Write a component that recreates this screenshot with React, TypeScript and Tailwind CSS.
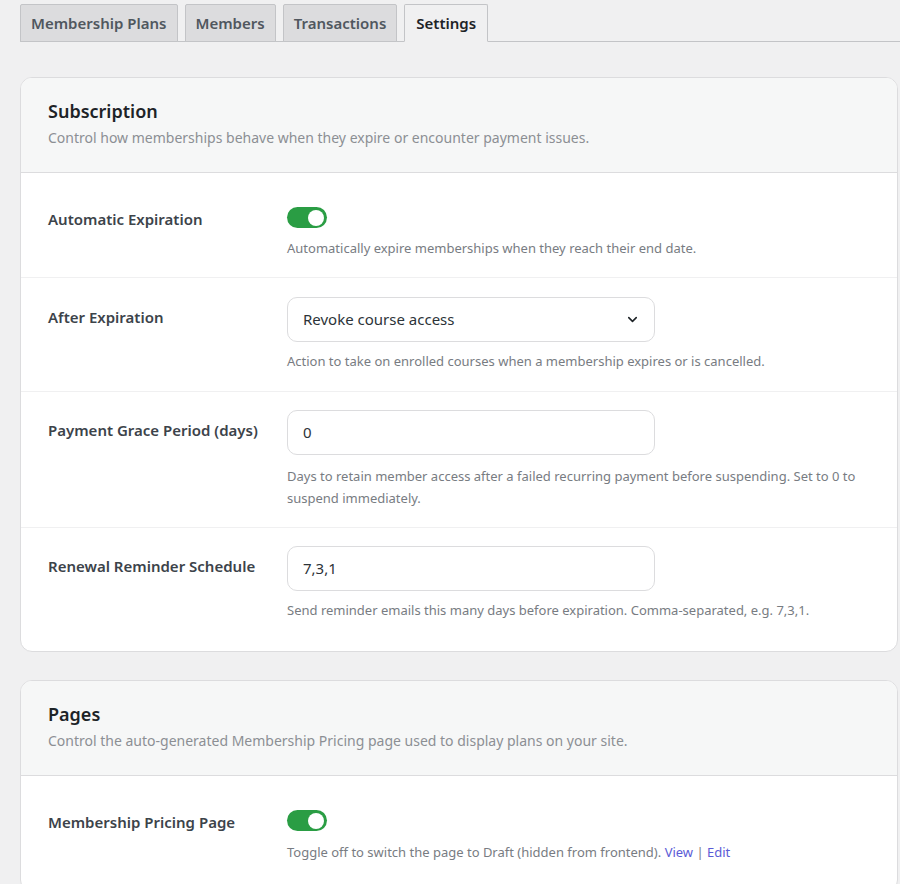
import { ChevronDown } from 'lucide-react'

const FONT = { fontFamily: '"Noto Sans", "Open Sans", sans-serif' }

const TABS = ['Membership Plans', 'Members', 'Transactions', 'Settings']

function Toggle() {
  return (
    <div className="flex h-[21px] w-[40px] items-center justify-end rounded-full bg-[#2a9d44] pr-[3px]">
      <div className="h-[16px] w-[16px] rounded-full bg-white" />
    </div>
  )
}

function TextBox({ value, select }: { value: string; select?: boolean }) {
  return (
    <div className="flex h-[45px] w-[368px] items-center justify-between rounded-[10px] border border-[#dcdcde] bg-white pl-[15px] pr-[14px] text-[15px] text-[#2c3338]">
      <span>{value}</span>
      {select && <ChevronDown className="h-[15px] w-[15px] text-[#1d2327]" strokeWidth={2.5} />}
    </div>
  )
}

function Row({ label, children, pt, pb, labelTop, last }: {
  label: string; children: React.ReactNode; pt: string; pb: string; labelTop: string; last?: boolean
}) {
  return (
    <div className={`flex px-[27px] ${pt} ${pb} ${last ? '' : 'border-b border-[#f0f0f1]'}`}>
      <div className={`w-[239px] shrink-0 text-[15px] font-semibold leading-[22px] text-[#3c434a] ${labelTop}`}>
        {label}
      </div>
      <div className="flex-1">{children}</div>
    </div>
  )
}

function Desc({ children, mt }: { children: React.ReactNode; mt: string }) {
  return <p className={`${mt} text-[13px] leading-[22px] text-[#787c82]`}>{children}</p>
}

function CardHeader({ title, desc }: { title: string; desc: string }) {
  return (
    <div className="border-b border-[#dcdcde] bg-[#f6f7f7] px-[27px] pt-[20px] pb-[23px]">
      <h2 className="text-[18px] font-semibold leading-[26px] text-[#1d2327]">{title}</h2>
      <p className="mt-[3px] text-[14px] leading-[22px] text-[#8c8f94]">{desc}</p>
    </div>
  )
}

export default function App() {
  return (
    <div className="min-h-screen bg-[#f0f0f1] pl-[20px]" style={FONT}>
      {/* tabs */}
      <div className="flex gap-[7px] border-b border-[#c3c4c7] pt-[4px]">
        {TABS.map(t => (
          <div
            key={t}
            className={`-mb-px rounded-t-[2px] border border-[#c3c4c7] px-[10px] py-[5px] text-[15px] font-semibold leading-[26px] ${
              t === 'Settings' ? 'border-b-[#f0f0f1] bg-[#f0f0f1] px-[11px] text-[#1d2327]' : 'bg-[#dcdcde] text-[#50575e]'
            }`}
          >
            {t}
          </div>
        ))}
      </div>

      {/* Subscription */}
      <div className="mr-[2px] mt-[35px] overflow-hidden rounded-[12px] border border-[#dcdcde] bg-white">
        <CardHeader title="Subscription" desc="Control how memberships behave when they expire or encounter payment issues." />

        <Row label="Automatic Expiration" pt="pt-[34px]" pb="pb-[18px]" labelTop="pt-[1px]">
          <Toggle />
          <Desc mt="mt-[9px]">Automatically expire memberships when they reach their end date.</Desc>
        </Row>

        <Row label="After Expiration" pt="pt-[19px]" pb="pb-[19px]" labelTop="pt-[9px]">
          <TextBox value="Revoke course access" select />
          <Desc mt="mt-[8px]">Action to take on enrolled courses when a membership expires or is cancelled.</Desc>
        </Row>

        <Row label="Payment Grace Period (days)" pt="pt-[18px]" pb="pb-[18px]" labelTop="pt-[9px]">
          <TextBox value="0" />
          <Desc mt="mt-[10px]">
            Days to retain member access after a failed recurring payment before suspending. Set to 0 to suspend immediately.
          </Desc>
        </Row>

        <Row label="Renewal Reminder Schedule" pt="pt-[18px]" pb="pb-[30px]" labelTop="pt-[9px]" last>
          <TextBox value="7,3,1" />
          <Desc mt="mt-[8px]">Send reminder emails this many days before expiration. Comma-separated, e.g. 7,3,1.</Desc>
        </Row>
      </div>

      {/* Pages */}
      <div className="mr-[2px] mt-[28px] overflow-hidden rounded-[12px] border border-[#dcdcde] bg-white">
        <CardHeader title="Pages" desc="Control the auto-generated Membership Pricing page used to display plans on your site." />

        <Row label="Membership Pricing Page" pt="pt-[34px]" pb="pb-[28px]" labelTop="pt-[1px]" last>
          <Toggle />
          <Desc mt="mt-[10px]">
            Toggle off to switch the page to Draft (hidden from frontend).{' '}
            <a className="text-[#5b5bd6]">View</a> | <a className="text-[#5b5bd6]">Edit</a>
          </Desc>
        </Row>
      </div>
    </div>
  )
}
